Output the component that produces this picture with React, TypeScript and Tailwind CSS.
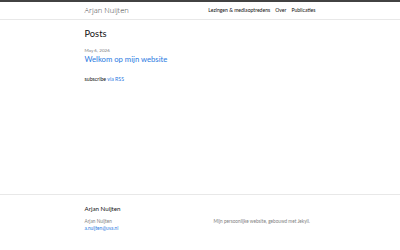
const font = { fontFamily: 'Lato, "Noto Sans", sans-serif' };

function Header() {
  return (
    <header className="border-t-2 border-t-[#424242] border-b border-b-[#e8e8e8] h-[20px]">
      <div className="mx-auto w-[231px] h-full flex items-center justify-between">
        <a className="text-[7.6px] font-light text-[#424242] font-['Open_Sans',sans-serif]">Arjan Nuijten</a>
        <nav className="flex gap-[5px] text-[5.1px] text-[#111]">
          <a>Lezingen &amp; mediaoptredens</a>
          <a>Over</a>
          <a>Publicaties</a>
        </nav>
      </div>
    </header>
  );
}

export default function App() {
  return (
    <div className="w-[400px] h-[250px] bg-white flex flex-col text-[#111]" style={font}>
      <Header />
      <main className="flex-1">
        <div className="mx-auto w-[231px] pt-[8px]">
          <h2 className="text-[9.3px] leading-[12px] mb-[7px]">Posts</h2>
          <ul>
            <li>
              <span className="block text-[4.6px] leading-[6px] text-[#828282]">May 6, 2026</span>
              <h3 className="text-[7.7px] leading-[12px]">
                <a className="text-[#2a7ae2]">Welkom op mijn website</a>
              </h3>
            </li>
          </ul>
          <p className="text-[5.2px] leading-[7px] mt-[11px]">
            subscribe <a className="text-[#2a7ae2]">via RSS</a>
          </p>
        </div>
      </main>
      <footer className="border-t border-[#e8e8e8] h-[56px] pt-[10px]">
        <div className="mx-auto w-[231px]">
          <h2 className="text-[6.2px] leading-[8px] mb-[5px]">Arjan Nuijten</h2>
          <div className="flex text-[4.7px] leading-[7px] text-[#828282]">
            <ul className="w-[129px]">
              <li>Arjan Nuijten</li>
              <li><a className="text-[#2a7ae2]">a.nuijten@uva.nl</a></li>
            </ul>
            <p>Mijn persoonlijke website, gebouwd met Jekyll.</p>
          </div>
        </div>
      </footer>
    </div>
  );
}
